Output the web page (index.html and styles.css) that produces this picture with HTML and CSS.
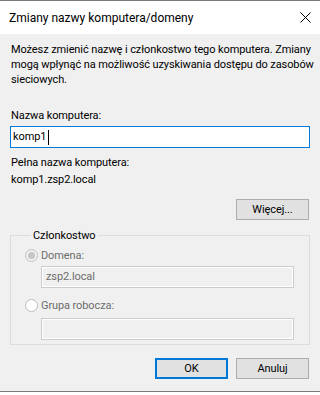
FILE: index.html
```html
<!DOCTYPE html>
<html lang="pl">

<head>
    <meta charset="UTF-8">
    <title>Zmiany nazwy komputera/domeny</title>
    <link rel="stylesheet" href="styles.css">
</head>

<body>
    <div class="window">
        <div class="titlebar">
            <span class="title">Zmiany nazwy komputera/domeny</span>
            <svg class="close" width="11" height="11" viewBox="0 0 11 11">
                <path d="M0.5 0.5 L10.5 10.5 M10.5 0.5 L0.5 10.5" stroke="#000" stroke-width="1" fill="none" />
            </svg>
        </div>

        <div class="content">
            <p class="intro">Możesz zmienić nazwę i członkostwo tego komputera. Zmiany<br>mogą wpłynąć na możliwość uzyskiwania dostępu do zasobów<br>sieciowych.</p>

            <label class="field-label" for="computerName">Nazwa komputera:</label>
            <div class="textbox active"><span>komp1</span><span class="caret"></span></div>

            <p class="full-label">Pełna nazwa komputera:</p>
            <p class="full-name">komp1.zsp2.local</p>

            <div class="more-row">
                <button class="btn">Więcej...</button>
            </div>

            <fieldset class="group">
                <legend>Członkostwo</legend>
                <div class="radio-row">
                    <span class="radio checked"></span>
                    <span class="radio-label">Domena:</span>
                </div>
                <div class="textbox disabled">zsp2.local</div>
                <div class="radio-row second">
                    <span class="radio"></span>
                    <span class="radio-label">Grupa robocza:</span>
                </div>
                <div class="textbox disabled"></div>
            </fieldset>

            <div class="actions">
                <button class="btn default">OK</button>
                <button class="btn">Anuluj</button>
            </div>
        </div>
    </div>
</body>

</html>
```

FILE: styles.css
```css
* {
    box-sizing: border-box;
    margin: 0;
    padding: 0;
}

body {
    width: 320px;
    height: 395px;
    background-color: #ffffff;
    font-family: Roboto, 'Liberation Sans', sans-serif;
    font-size: 11px;
    letter-spacing: -0.1px;
    color: #000;
    overflow: hidden;
}

.window {
    width: 320px;
    height: 392px;
    border-top: 1px solid #7a7a7a;
    border-bottom: 1px solid #7a7a7a;
    display: flex;
    flex-direction: column;
}

.titlebar {
    height: 33px;
    background-color: #ffffff;
    display: flex;
    align-items: center;
    justify-content: space-between;
    padding: 0 9px 0 9px;
}

.title {
    font-size: 12px;
    letter-spacing: 0;
    line-height: 16px;
}

.close {
    display: block;
    margin-top: -1px;
}

.content {
    flex: 1;
    background-color: #f0f0f0;
    padding: 8px 10px 0 10px;
}

.intro {
    line-height: 15px;
    padding-left: 1px;
    white-space: nowrap;
}

.field-label {
    display: block;
    margin-top: 21px;
    line-height: 15px;
    padding-left: 1px;
}

.textbox {
    height: 22px;
    border: 1px solid #7a7a7a;
    background-color: #fff;
    padding: 0 2px;
    line-height: 20px;
    display: flex;
    align-items: center;
}

.textbox.active {
    border-color: #0078d7;
    margin-top: 3px;
}

.caret {
    display: inline-block;
    width: 1px;
    height: 15px;
    background-color: #000;
    margin-left: 2px;
}

.full-label {
    margin-top: 7px;
    line-height: 15px;
    padding-left: 1px;
}

.full-name {
    margin-top: 2px;
    line-height: 15px;
    padding-left: 1px;
}

.more-row {
    display: flex;
    justify-content: flex-end;
    margin-top: 12px;
    padding-right: 1px;
}

.btn {
    width: 73px;
    height: 21px;
    border: 1px solid #adadad;
    background-color: #e1e1e1;
    font-family: inherit;
    font-size: 11px;
    letter-spacing: -0.1px;
    color: #000;
}

.btn.default {
    border: 2px solid #0078d7;
}

.group {
    margin-top: 8px;
    border: 1px solid #dcdcdc;
    padding: 5px 15px 10px 14px;
    height: 117px;
}

.group legend {
    margin-left: 6px;
    padding: 0 2px;
    line-height: 15px;
}

.radio-row {
    display: flex;
    align-items: center;
    gap: 3px;
    height: 15px;
    margin-bottom: 3px;
}

.radio-row.second {
    margin-top: 10px;
    margin-bottom: 5px;
}

.radio {
    width: 13px;
    height: 13px;
    border-radius: 50%;
    border: 1px solid #bcbcbc;
    background-color: #fff;
    display: flex;
    align-items: center;
    justify-content: center;
}

.radio.checked {
    background-color: #f0f0f0;
    border-color: #c2c2c2;
}

.radio.checked::after {
    content: "";
    width: 7px;
    height: 7px;
    border-radius: 50%;
    background-color: #c6c6c6;
}

.radio-label {
    color: #6d6d6d;
    line-height: 15px;
}

.textbox.disabled {
    margin-left: 16px;
    border-color: #cccccc;
    background-color: #f0f0f0;
    box-shadow: inset 0 0 0 1px #ffffff;
    color: #6d6d6d;
    padding-left: 4px;
}

.actions {
    display: flex;
    justify-content: flex-end;
    gap: 8px;
    margin-top: 13px;
    padding-right: 1px;
}
```
